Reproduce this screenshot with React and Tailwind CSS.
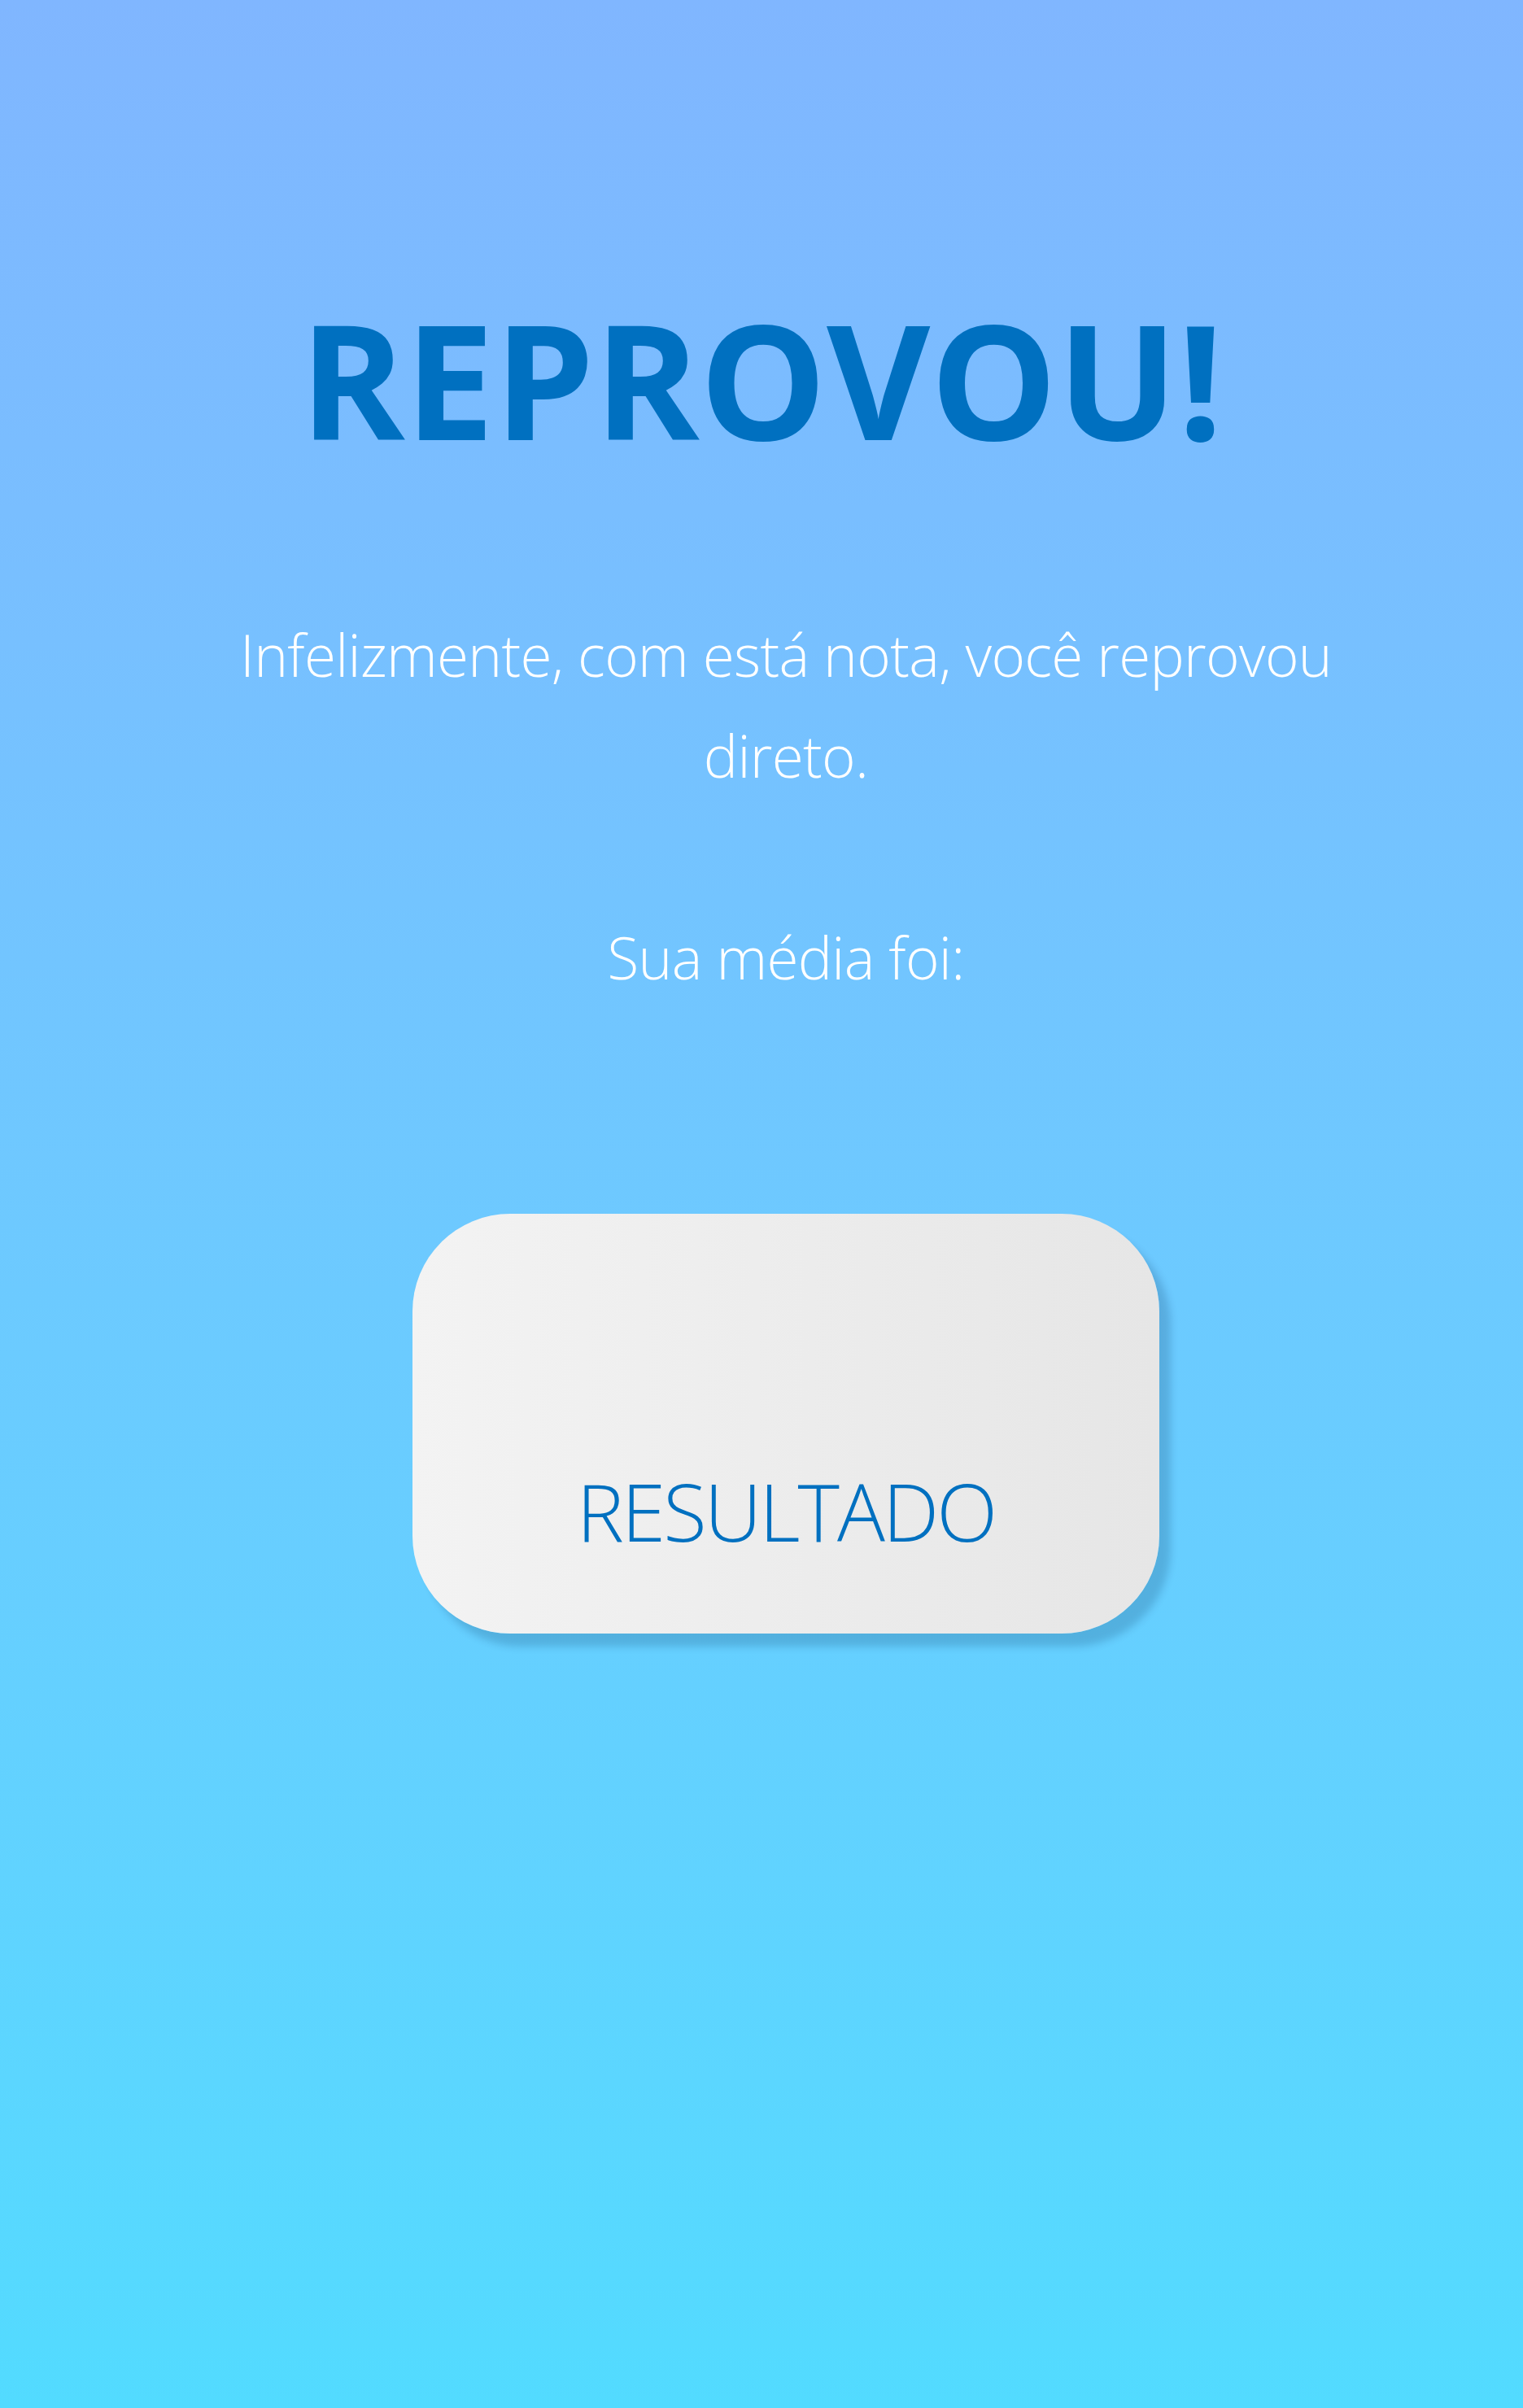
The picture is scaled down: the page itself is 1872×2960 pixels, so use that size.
export default function App() {
  return (
    <main
      className="min-h-[2960px] w-full bg-linear-to-b from-[#80b6ff] to-[#52dbff] flex flex-col items-center text-center pt-[367px]"
      style={{ fontFamily: "'Open Sans', 'Noto Sans', sans-serif" }}
    >
      <h1 className="text-[196px] leading-none font-bold text-[#0070c0]">REPROVOU!</h1>

      {/* content block sits slightly right of the title */}
      <section className="pl-[60px] flex flex-col items-center">
        <p className="mt-[180px] w-[1440px] text-[71px] leading-[124px] font-light tracking-[-0.01em] text-white">
          Infelizmente, com está nota, você reprovou direto.
        </p>

        <p className="mt-[124px] text-[71px] leading-[124px] font-light tracking-[-0.01em] text-white">
          Sua média foi:
        </p>

        <button className="mt-[253px] w-[918px] h-[516px] rounded-[120px] bg-linear-to-r from-[#f3f3f3] to-[#e6e6e6] shadow-[14px_16px_10px_rgba(0,40,80,0.18)] flex flex-col items-center justify-end pb-[102px]">
          <span className="text-[98px] leading-none font-light tracking-[-0.03em] text-[#0070c0]">RESULTADO</span>
        </button>
      </section>
    </main>
  )
}
